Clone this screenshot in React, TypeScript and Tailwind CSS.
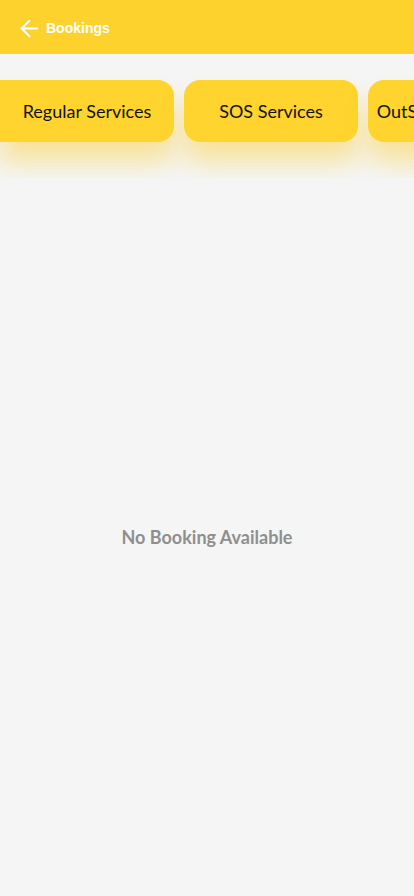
import { ArrowLeft } from "lucide-react"

const tabs = ["Regular Services", "SOS Services", "OutStation Services"]

export default function App() {
  return (
    <div className="min-h-[896px] flex flex-col bg-[#f5f5f5]" style={{ fontFamily: "Lato, 'Open Sans', sans-serif" }}>
      <header className="h-[54px] bg-[#fdd22d] flex items-center pl-[16px] pt-[2px] gap-[3px]">
        <ArrowLeft className="w-[27px] h-[27px] text-white" strokeWidth={1.8} />
        <h1 className="text-white font-bold text-[14px] font-['Liberation_Sans',Arial,sans-serif]">Bookings</h1>
      </header>

      <div className="overflow-hidden">
        <div className="flex gap-[10px] pt-[26px] pb-[36px]">
          {tabs.map((tab, i) => (
            <button
              key={tab}
              className={`shrink-0 w-[174px] h-[62px] bg-[#ffd42e] text-[#111] text-[18px] shadow-[0_20px_26px_rgba(253,205,40,0.45)] whitespace-nowrap overflow-hidden ${
                i === 0 ? "rounded-r-[16px]" : "rounded-[16px]"
              }`}
            >
              {tab}
            </button>
          ))}
        </div>
      </div>

      <main className="flex-1 flex items-center justify-center">
        <p className="text-[#8f8f8f] font-bold text-[18px]">No Booking Available</p>
      </main>
    </div>
  )
}
